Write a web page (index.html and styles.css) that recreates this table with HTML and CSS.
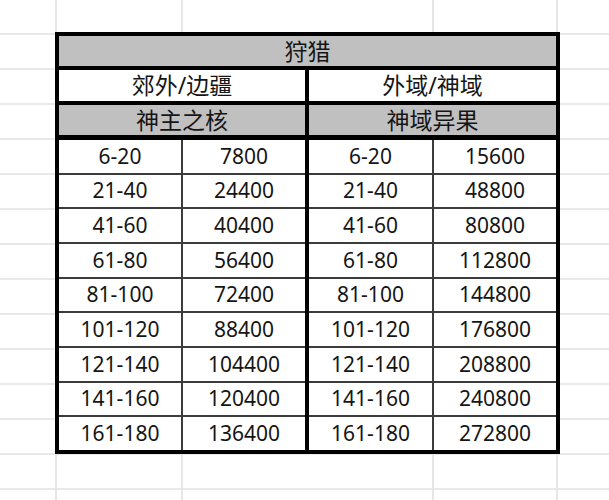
FILE: index.html
```html
<!DOCTYPE html>
<html lang="zh">
<head>
<meta charset="utf-8">
<title>狩猎</title>
<link rel="stylesheet" href="styles.css">
</head>
<body>
<div class="page">
  <div class="sheet">
    <div class="cell gray title">狩猎</div>
    <div class="pair">
      <div class="cell white">郊外/边疆</div>
      <div class="cell white">外域/神域</div>
    </div>
    <div class="pair">
      <div class="cell gray">神主之核</div>
      <div class="cell gray">神域异果</div>
    </div>
    <div class="data">
      <div class="half left">
        <div class="cell white">6-20</div><div class="cell white">7800</div>
        <div class="cell white">21-40</div><div class="cell white">24400</div>
        <div class="cell white">41-60</div><div class="cell white">40400</div>
        <div class="cell white">61-80</div><div class="cell white">56400</div>
        <div class="cell white">81-100</div><div class="cell white">72400</div>
        <div class="cell white">101-120</div><div class="cell white">88400</div>
        <div class="cell white">121-140</div><div class="cell white">104400</div>
        <div class="cell white">141-160</div><div class="cell white">120400</div>
        <div class="cell white">161-180</div><div class="cell white">136400</div>
      </div>
      <div class="half right">
        <div class="cell white">6-20</div><div class="cell white">15600</div>
        <div class="cell white">21-40</div><div class="cell white">48800</div>
        <div class="cell white">41-60</div><div class="cell white">80800</div>
        <div class="cell white">61-80</div><div class="cell white">112800</div>
        <div class="cell white">81-100</div><div class="cell white">144800</div>
        <div class="cell white">101-120</div><div class="cell white">176800</div>
        <div class="cell white">121-140</div><div class="cell white">208800</div>
        <div class="cell white">141-160</div><div class="cell white">240800</div>
        <div class="cell white">161-180</div><div class="cell white">272800</div>
      </div>
    </div>
  </div>
</div>
</body>
</html>
```
FILE: styles.css
```css
html, body {
  margin: 0;
  padding: 0;
  background: #ffffff;
}

.page {
  box-sizing: border-box;
  width: 609px;
  height: 500px;
  padding: 32px 0 0 55px;
  font-family: "Noto Sans", "Noto Sans CJK SC", sans-serif;
  color: #151515;
  background-color: #ffffff;
  background-image:
    linear-gradient(#e6e6e6, #e6e6e6),
    linear-gradient(#e6e6e6, #e6e6e6),
    linear-gradient(#e6e6e6, #e6e6e6),
    linear-gradient(#e6e6e6, #e6e6e6),
    linear-gradient(to bottom, #e9e9e9 0, #e9e9e9 2px, transparent 2px, transparent 35px);
  background-size:
    2px 100%,
    2px 100%,
    2px 100%,
    2px 100%,
    100% 35px;
  background-repeat: no-repeat, no-repeat, no-repeat, no-repeat, repeat-y;
  background-position:
    55px 0,
    181px 0,
    432px 0,
    556px 0,
    0 33px;
}

.sheet {
  box-sizing: border-box;
  width: 505px;
  height: 422px;
  border: 4px solid #000;
  background: #000;
  display: flex;
  flex-direction: column;
  gap: 4px;
}

.cell {
  display: flex;
  align-items: center;
  justify-content: center;
  font-size: 21px;
  line-height: 1;
}

.gray {
  background: #c0c0c0;
}

.white {
  background: #ffffff;
}

.title {
  height: 30px;
  font-size: 23px;
}

.pair {
  display: grid;
  grid-template-columns: 246px 247px;
  gap: 4px;
  height: 31px;
}

.pair + .pair {
  height: 30px;
}

.pair .cell {
  font-size: 23px;
}

.data {
  flex: 1;
  display: grid;
  grid-template-columns: 246px 247px;
  gap: 4px;
  margin-top: 1px;
}

.half {
  display: grid;
  grid-template-rows: repeat(9, 1fr);
  gap: 2px;
  background: #3c3c3c;
}

.half.left {
  grid-template-columns: 122px 122px;
}

.half.right {
  grid-template-columns: 123px 122px;
}
```
